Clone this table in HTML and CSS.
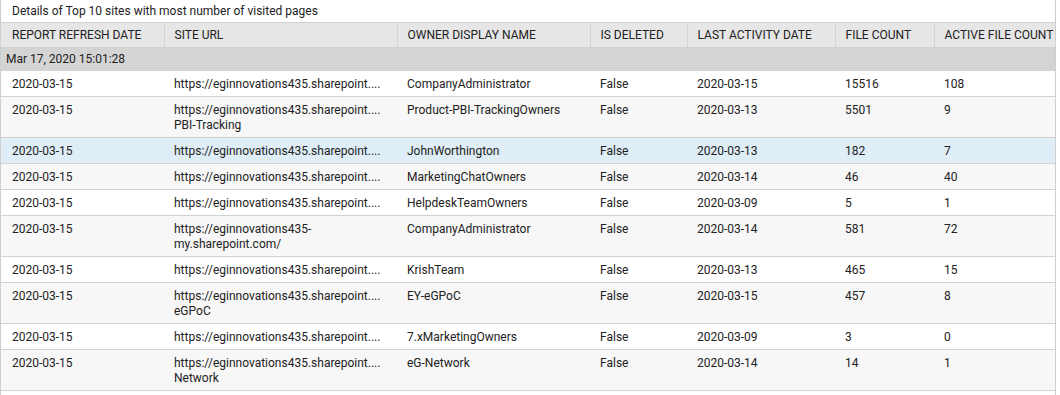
FILE: index.html
```html
<!DOCTYPE html>
<html>
<head>
<meta charset="utf-8">
<link rel="stylesheet" href="styles.css">
</head>
<body>
<div class="widget">
  <div class="title">Details of Top 10 sites with most number of visited pages</div>
  <table class="grid">
    <colgroup>
      <col class="c1"><col class="c2"><col class="c3"><col class="c4"><col class="c5"><col class="c6"><col class="c7">
    </colgroup>
    <thead>
      <tr>
        <th>REPORT REFRESH DATE</th>
        <th>SITE URL</th>
        <th>OWNER DISPLAY NAME</th>
        <th>IS DELETED</th>
        <th>LAST ACTIVITY DATE</th>
        <th>FILE COUNT</th>
        <th>ACTIVE FILE COUNT</th>
      </tr>
    </thead>
    <tbody>
      <tr class="group"><td colspan="7">Mar 17, 2020 15:01:28</td></tr>
      <tr><td>2020-03-15</td><td><span class="ln">https://eginnovations435.sharepoint....</span></td><td>CompanyAdministrator</td><td>False</td><td>2020-03-15</td><td>15516</td><td>108</td></tr>
      <tr class="alt"><td>2020-03-15</td><td><span class="ln">https://eginnovations435.sharepoint....</span><br><span class="ln">PBI-Tracking</span></td><td>Product-PBI-TrackingOwners</td><td>False</td><td>2020-03-13</td><td>5501</td><td>9</td></tr>
      <tr class="sel"><td>2020-03-15</td><td><span class="ln">https://eginnovations435.sharepoint....</span></td><td>JohnWorthington</td><td>False</td><td>2020-03-13</td><td>182</td><td>7</td></tr>
      <tr class="alt"><td>2020-03-15</td><td><span class="ln">https://eginnovations435.sharepoint....</span></td><td>MarketingChatOwners</td><td>False</td><td>2020-03-14</td><td>46</td><td>40</td></tr>
      <tr><td>2020-03-15</td><td><span class="ln">https://eginnovations435.sharepoint....</span></td><td>HelpdeskTeamOwners</td><td>False</td><td>2020-03-09</td><td>5</td><td>1</td></tr>
      <tr class="alt"><td>2020-03-15</td><td><span class="ln">https://eginnovations435-</span><br><span class="ln">my.sharepoint.com/</span></td><td>CompanyAdministrator</td><td>False</td><td>2020-03-14</td><td>581</td><td>72</td></tr>
      <tr><td>2020-03-15</td><td><span class="ln">https://eginnovations435.sharepoint....</span></td><td>KrishTeam</td><td>False</td><td>2020-03-13</td><td>465</td><td>15</td></tr>
      <tr class="alt"><td>2020-03-15</td><td><span class="ln">https://eginnovations435.sharepoint....</span><br><span class="ln">eGPoC</span></td><td>EY-eGPoC</td><td>False</td><td>2020-03-15</td><td>457</td><td>8</td></tr>
      <tr><td>2020-03-15</td><td><span class="ln">https://eginnovations435.sharepoint....</span></td><td>7.xMarketingOwners</td><td>False</td><td>2020-03-09</td><td>3</td><td>0</td></tr>
      <tr class="alt"><td>2020-03-15</td><td><span class="ln">https://eginnovations435.sharepoint....</span><br><span class="ln">Network</span></td><td>eG-Network</td><td>False</td><td>2020-03-14</td><td>14</td><td>1</td></tr>
    </tbody>
  </table>
</div>
</body>
</html>
```
FILE: styles.css
```css
html, body {
  margin: 0;
  padding: 0;
  background: #ffffff;
}
body {
  font-family: Roboto, "Liberation Sans", sans-serif;
  font-size: 12px;
  color: #222222;
}
.widget {
  width: 1054px;
  height: 395px;
  border-left: 1px solid #cfcfcf;
  border-right: 1px solid #cfcfcf;
  box-sizing: content-box;
}
.title {
  height: 22px;
  line-height: 22px;
  padding-left: 11px;
  color: #222222;
}
.grid {
  width: 1054px;
  border-collapse: collapse;
  table-layout: fixed;
}
.c1 { width: 163px; }
.c2 { width: 233px; }
.c3 { width: 193px; }
.c4 { width: 97px; }
.c5 { width: 148px; }
.c6 { width: 99px; }
.c7 { width: 121px; }
.grid th {
  background: #e6e6e6;
  font-weight: normal;
  text-align: left;
  height: 24px;
  padding: 1px 0 0 10px;
  line-height: 23px;
  border-top: 1px solid #d2d2d2;
  border-bottom: 1px solid #d2d2d2;
  border-left: 1px solid #d2d2d2;
  white-space: nowrap;
  overflow: hidden;
  color: #222222;
  box-sizing: border-box;
}
.grid th:first-child {
  border-left: none;
  padding-left: 11px;
}
.grid td {
  padding: 6px 0 4px 10px;
  line-height: 15px;
  vertical-align: top;
  border-bottom: 1px solid #d2d2d2;
  white-space: nowrap;
  overflow: hidden;
  background: #ffffff;
}
.grid td:first-child {
  padding-left: 11px;
}
.grid tr.alt td {
  background: #f7f7f7;
}
.grid tr.sel td {
  background: #deedf6;
}
.grid tr.group td {
  background: #d4d4d4;
  padding: 4px 0 3px 5px;
  line-height: 15px;
}
.ln {
  white-space: nowrap;
}
```
